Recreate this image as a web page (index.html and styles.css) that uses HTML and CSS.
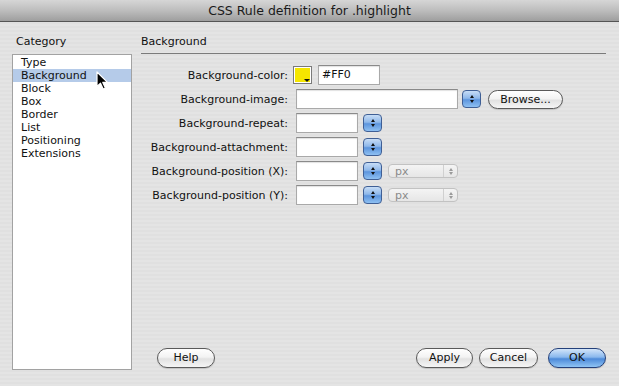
FILE: index.html
```html
<!DOCTYPE html>
<html>
<head>
<meta charset="utf-8">
<link rel="stylesheet" href="styles.css">
</head>
<body>
<div class="dialog">
  <div class="titlebar">CSS Rule definition for .highlight</div>
  <div class="main">
    <div class="sidebar">
      <div class="side-title">Category</div>
      <div class="list">
        <div class="item">Type</div>
        <div class="item selected">Background</div>
        <div class="item">Block</div>
        <div class="item">Box</div>
        <div class="item">Border</div>
        <div class="item">List</div>
        <div class="item">Positioning</div>
        <div class="item">Extensions</div>
      </div>
    </div>
    <div class="panel">
      <div class="panel-title">Background</div>
      <div class="form">
        <div class="row">
          <div class="label">Background-color:</div>
          <div class="swatch"><span class="swatch-fill"></span><span class="swatch-arrow"></span></div>
          <div class="input w62 color-input">#FF0</div>
        </div>
        <div class="row">
          <div class="label">Background-image:</div>
          <div class="input w162 first"></div>
          <div class="spin g4"><span class="up"></span><span class="down"></span></div>
          <div class="pill browse">Browse...</div>
        </div>
        <div class="row">
          <div class="label">Background-repeat:</div>
          <div class="input w62 first"></div>
          <div class="spin g5"><span class="up"></span><span class="down"></span></div>
        </div>
        <div class="row">
          <div class="label">Background-attachment:</div>
          <div class="input w62 first"></div>
          <div class="spin g5"><span class="up"></span><span class="down"></span></div>
        </div>
        <div class="row">
          <div class="label">Background-position (X):</div>
          <div class="input w62 first"></div>
          <div class="spin g5"><span class="up"></span><span class="down"></span></div>
          <div class="select"><span>px</span><span class="sel-arrows"><i class="su"></i><i class="sd"></i></span></div>
        </div>
        <div class="row">
          <div class="label">Background-position (Y):</div>
          <div class="input w62 first"></div>
          <div class="spin g5"><span class="up"></span><span class="down"></span></div>
          <div class="select"><span>px</span><span class="sel-arrows"><i class="su"></i><i class="sd"></i></span></div>
        </div>
      </div>
      <div class="footer">
        <div class="pill help">Help</div>
        <div class="right-buttons">
          <div class="pill apply">Apply</div>
          <div class="pill cancel">Cancel</div>
          <div class="pill ok">OK</div>
        </div>
      </div>
    </div>
  </div>
  <svg class="cursor" width="13" height="20" viewBox="0 0 13 20">
    <path d="M1 1 L1 15.5 L4.5 12.2 L7.2 18 L9.4 17 L6.8 11.4 L11.5 11.4 Z" fill="#000" stroke="#fff" stroke-width="1.2" stroke-linejoin="round"/>
  </svg>
</div>
</body>
</html>
```
FILE: styles.css
```css
* { box-sizing: border-box; }
html, body { margin: 0; padding: 0; }
body {
  width: 619px;
  height: 386px;
  overflow: hidden;
  font-family: "DejaVu Sans", "Liberation Sans", sans-serif;
  font-size: 11px;
  color: #111;
  background: #e3e3e3;
}
.dialog {
  position: relative;
  width: 619px;
  height: 386px;
  display: flex;
  flex-direction: column;
  background: repeating-linear-gradient(180deg, #e4e4e4 0, #e4e4e4 2px, #e0e0e0 2px, #e0e0e0 4px);
}
.titlebar {
  height: 22px;
  flex: none;
  text-align: center;
  line-height: 21px;
  font-size: 12.5px;
  color: #1a1a1a;
  background: linear-gradient(180deg, #d6d6d6 0%, #bdbdbd 50%, #9e9e9e 100%);
  border-bottom: 1px solid #555;
}
.main {
  flex: 1;
  display: flex;
}
.sidebar {
  width: 141px;
  flex: none;
  padding: 13px 0 16px 12px;
  display: flex;
  flex-direction: column;
}
.side-title {
  padding-left: 4px;
  height: 19px;
  line-height: 14px;
}
.list {
  flex: 1;
  width: 120px;
  background: #fff;
  border: 1px solid #a2a2a2;
  padding-top: 1px;
}
.item {
  height: 13px;
  line-height: 13px;
  padding-left: 8px;
}
.item.selected { background: #b5cbe9; }
.panel {
  flex: 1;
  display: flex;
  flex-direction: column;
  padding-right: 13px;
}
.panel-title {
  margin-top: 13px;
  height: 19px;
  line-height: 14px;
  border-bottom: 1px solid #7a7a7a;
  padding-left: 0;
}
.form {
  margin-top: 11px;
  display: flex;
  flex-direction: column;
  gap: 4px;
}
.row {
  height: 20px;
  display: flex;
  align-items: center;
}
.label {
  width: 147px;
  text-align: right;
  white-space: nowrap;
  font-size: 11px;
}
.input {
  height: 20px;
  background: #fff;
  border: 1px solid #a9a9a9;
  border-top-color: #8a8a8a;
  box-shadow: inset 0 1px 1px rgba(0,0,0,0.12);
  font-size: 11px;
  line-height: 18px;
  padding-left: 3px;
}
.first { margin-left: 8px; }
.w62 { width: 62px; }
.w162 { width: 162px; }
.color-input { margin-left: 6px; }
.swatch {
  position: relative;
  margin-left: 5px;
  width: 19px;
  height: 18px;
  background: #fff;
  border: 1px solid #7a7a7a;
  padding: 1px;
}
.swatch-fill {
  display: block;
  width: 100%;
  height: 100%;
  background: #f5e600;
}
.swatch-arrow {
  position: absolute;
  right: 1px;
  bottom: 1px;
  width: 0;
  height: 0;
  border-left: 3px solid transparent;
  border-right: 3px solid transparent;
  border-top: 3px solid #111;
}
.spin {
  width: 19px;
  height: 18px;
  border-radius: 4px;
  border: 1px solid #3f5f95;
  background: linear-gradient(180deg, #c7ddf6 0%, #8fb8ea 45%, #5d95dd 55%, #8ec0f2 100%);
  display: flex;
  flex-direction: column;
  align-items: center;
  justify-content: center;
  gap: 2px;
}
.g4 { margin-left: 4px; }
.g5 { margin-left: 5px; }
.spin .up, .spin .down { width: 0; height: 0; border-left: 2.5px solid transparent; border-right: 2.5px solid transparent; }
.spin .up { border-bottom: 3px solid #111; }
.spin .down { border-top: 3px solid #111; }
.pill {
  height: 20px;
  border-radius: 10px;
  border: 1px solid #5a5a5a;
  background: linear-gradient(180deg, #ffffff 0%, #f3f3f3 45%, #e2e2e2 55%, #f5f5f5 100%);
  text-align: center;
  line-height: 18px;
  font-size: 11px;
  box-shadow: 0 1px 1px rgba(0,0,0,0.15);
}
.browse { width: 75px; margin-left: 7px; height: 19px; line-height: 17px; }
.select {
  margin-left: 6px;
  width: 70px;
  height: 14px;
  border-radius: 4px;
  border: 1px solid #c2c2c2;
  background: linear-gradient(180deg, #f4f4f4 0%, #e6e6e6 100%);
  display: flex;
  align-items: center;
  justify-content: space-between;
  color: #8a8a8a;
  font-size: 11px;
  padding-left: 6px;
}
.sel-arrows {
  width: 14px;
  height: 12px;
  border-left: 1px solid #d0d0d0;
  display: flex;
  flex-direction: column;
  align-items: center;
  justify-content: center;
  gap: 1px;
}
.sel-arrows i { width: 0; height: 0; border-left: 2px solid transparent; border-right: 2px solid transparent; }
.sel-arrows .su { border-bottom: 3px solid #9a9a9a; }
.sel-arrows .sd { border-top: 3px solid #9a9a9a; }
.footer {
  margin-top: auto;
  padding: 0 0 18px 16px;
  display: flex;
  justify-content: space-between;
  align-items: center;
}
.help { width: 58px; }
.right-buttons { display: flex; }
.apply { width: 57px; }
.cancel { width: 59px; margin-left: 6px; }
.ok {
  width: 58px;
  margin-left: 10px;
  border-color: #24407a;
  background: linear-gradient(180deg, #d3e5f9 0%, #8ab8ee 45%, #4d8ad9 55%, #8fc4f4 100%);
}
.cursor {
  position: absolute;
  left: 96px;
  top: 71px;
}
```
